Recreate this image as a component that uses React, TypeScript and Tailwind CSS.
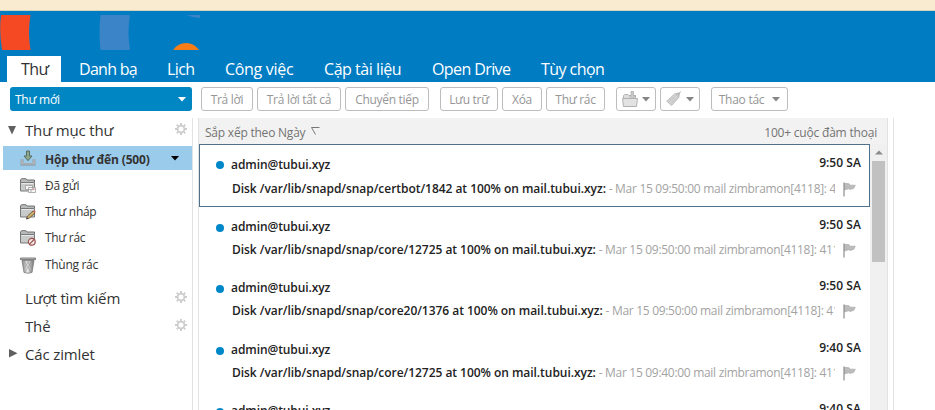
import React from "react";

const tabs = [
  { label: "Danh bạ", box: "w-[88px]", text: "tracking-[-0.7px]" },
  { label: "Lịch", box: "w-[58px]", text: "tracking-[-0.6px]" },
  { label: "Công việc", box: "w-[99px]", text: "tracking-[-0.3px]" },
  { label: "Cặp tài liệu", box: "w-[108px]", text: "tracking-[-0.45px]" },
  { label: "Open Drive", box: "w-[109px]", text: "tracking-[-0.6px]" },
  { label: "Tùy chọn", box: "w-[90px]", text: "tracking-[-0.55px]" },
];

const mails = [
  { path: "certbot/1842", time: "9:50 SA", clock: "09:50:00", tail: "4", box: "h-[63px] border border-[#4f718c]", head: "h-[36px] pt-[3px]" },
  { path: "core/12725", time: "9:50 SA", clock: "09:50:00", tail: "411", box: "h-[61px] border-x border-transparent", head: "h-[35px] pt-[5px]" },
  { path: "core20/1376", time: "9:50 SA", clock: "09:50:00", tail: "41", box: "h-[62px] border-x border-transparent", head: "h-[35px] pt-[5px]" },
  { path: "core/12725", time: "9:40 SA", clock: "09:40:00", tail: "411", box: "h-[61px] border-x border-transparent", head: "h-[35px] pt-[5px]" },
  { path: "core/12725", time: "9:40 SA", clock: "09:40:00", tail: "411", box: "h-[61px] border-x border-transparent", head: "h-[35px] pt-[5px]" },
];

function Caret({ className }: { className: string }) {
  return (
    <svg width="8" height="5" viewBox="0 0 8 5" className={`shrink-0 ${className}`}>
      <path d="M0 0h8L4 4.5z" fill="currentColor" />
    </svg>
  );
}

function Gear() {
  return (
    <svg width="12" height="12" viewBox="0 0 12 12" className="-mt-[3px] shrink-0 text-[#cdcdcd]" fill="none" stroke="currentColor">
      <circle cx="6" cy="6" r="3.400" strokeWidth="1.800" />
      <path
        d="M6 0v2M6 10v2M0 6h2M10 6h2M1.800 1.800l1.300 1.300M8.900 8.900l1.300 1.300M1.800 10.200l1.300-1.300M8.900 3.100l1.300-1.300"
        strokeWidth="2"
      />
    </svg>
  );
}

function Flag() {
  return (
    <svg width="13" height="15" viewBox="0 0 13 15" className="shrink-0">
      <path d="M1.500 1.200L6 1.800 7.500 3.200H12.300L10.800 6.200 7.500 7.400 5.500 6.800 1.500 8z" fill="#bcbcbc" stroke="#a2a2a2" strokeWidth=".6" />
      <path d="M1 .5v14" stroke="#8e8e8e" strokeWidth="1.200" />
    </svg>
  );
}

function FolderShape() {
  return (
    <>
      <path d="M.5 12.500V2L1.500 .7h4.500l1 1.300h7.500v2" fill="#b9bbbb" stroke="#707273" />
      <path d="M.5 13V4.500h14V13z" fill="#c9cbcb" stroke="#77797a" />
      <path d="M1.500 5.500h12" stroke="#e8e8e8" />
    </>
  );
}

function FolderIcon({ kind }: { kind: string }) {
  if (kind === "inbox") {
    return (
      <svg width="16" height="16" viewBox="0 0 16 16" className="shrink-0">
        <path d="M2 9v5.300h12V9" fill="none" stroke="#858b90" strokeWidth="2.600" />
        <path d="M2 9v5h12V9" fill="none" stroke="#c4cacd" strokeWidth="1.200" />
        <path d="M6.500 1h3v5H12l-4 4.700L4 6h2.500z" fill="#8ca78c" stroke="#526453" strokeWidth=".9" />
      </svg>
    );
  }
  if (kind === "trash") {
    return (
      <svg width="16" height="17" viewBox="0 0 16 17" className="shrink-0">
        <defs>
          <linearGradient id="bin" x1="0" x2="1">
            <stop offset="0" stopColor="#808080" />
            <stop offset=".45" stopColor="#ececec" />
            <stop offset="1" stopColor="#707070" />
          </linearGradient>
        </defs>
        <path d="M2 3.500h12L12 15.500Q8 17 4 15.500z" fill="url(#bin)" stroke="#7c7c7c" strokeWidth=".8" />
        <path d="M4 4l7 11M7 4l5 8M12 4L5 15M9 4l-5 8" stroke="#8a8a8a" strokeWidth=".5" />
        <path d="M.5 1h15v1.600H.5z" fill="#c9c9c9" stroke="#606060" strokeWidth=".8" />
      </svg>
    );
  }
  return (
    <svg width="16" height="16" viewBox="0 0 16 16" className="shrink-0">
      <FolderShape />
      {kind === "sent" && (
        <>
          <path d="M5.500 7.500h7v4h-7zM8.500 9.500h7v5h-7z" fill="#f8f8f8" stroke="#9c9c9c" strokeWidth=".8" />
          <path d="M10 12h2.500M10 13.200h2" stroke="#9a9a9a" strokeWidth=".6" />
          <path d="M13.200 10.500h1.200v1.200h-1.200z" fill="#c55" />
        </>
      )}
      {kind === "draft" && (
        <>
          <path d="M6.500 15l1-3 5.500-5 2 2-5.500 5z" fill="#cdb068" stroke="#5b4d32" strokeWidth=".8" />
          <path d="M13 7l1.200-1 1.500 1.600L15 9z" fill="#d26b63" />
          <path d="M6.300 15.300l.5-1.700 1.300 1.200z" fill="#333" />
        </>
      )}
      {kind === "junk" && (
        <>
          <circle cx="11.800" cy="11.800" r="3.400" fill="#f3e9e8" stroke="#9c5350" strokeWidth="1.200" />
          <path d="M9.500 14.100l4.600-4.600" stroke="#9c5350" strokeWidth="1.200" />
        </>
      )}
    </svg>
  );
}

function ToolButton({ children, className }: { children: React.ReactNode; className: string }) {
  return (
    <button
      className={`flex h-6 shrink-0 items-center justify-center whitespace-nowrap rounded-[3px] border border-[#bdbdbd] bg-white text-[12px] text-[#969696] ${className}`}
    >
      {children}
    </button>
  );
}

function Section({ label, arrow, gear, className }: { label: string; arrow?: string; gear?: boolean; className: string }) {
  return (
    <div className={`flex h-7 items-center pl-2 pr-[5px] ${className}`}>
      <div className="w-[17px] text-[#606060]">
        {arrow === "down" && (
          <svg width="9" height="9" viewBox="0 0 9 9"><path d="M0 0h8L4 8.500z" fill="currentColor" /></svg>
        )}
        {arrow === "right" && (
          <svg width="9" height="9" viewBox="0 0 9 9" className="-mt-0.5 ml-px"><path d="M0 0v8.500L8.500 4.200z" fill="currentColor" /></svg>
        )}
      </div>
      <span className="flex-1 whitespace-nowrap text-[15px] tracking-[-0.15px] text-[#333]">{label}</span>
      {gear && <Gear />}
    </div>
  );
}

function Folder({ kind, label, className }: { kind: string; label: string; className: string }) {
  return (
    <div className={`flex items-center pl-5 text-[12px] tracking-[-0.3px] text-[#333] ${className}`}>
      <FolderIcon kind={kind} />
      <span className="ml-[9px] whitespace-nowrap">{label}</span>
    </div>
  );
}

export default function App() {
  return (
    <div className="flex h-[410px] w-[935px] flex-col overflow-hidden bg-white font-['Open_Sans','Noto_Sans',sans-serif]">
      <div className="h-[11px] shrink-0 border-b border-[#d3d2bd] bg-[#f8ebcf]" />

      <header className="flex h-[71px] shrink-0 flex-col bg-[#007cc3]">
        <svg width="200" height="35" viewBox="0 0 200 35" className="mt-1 shrink-0">
          <path d="M1 0h29.500q-3 17.500 0 35H2Q-1 17 1 0z" fill="#f54923" />
          <path d="M100.500 0H130q-3 17.500 0 35h-29.500q-2-17.500 0-35z" fill="#3c84c8" />
          <path d="M173 35q5-7 13-7t13 7z" fill="#f77d18" />
          <path d="M187 0h13v3q-7 0-13-3z" fill="#3c84c8" />
        </svg>
        <nav className="mt-1.5 flex h-[26px] pl-[7px] text-[16px] leading-[27px] text-white">
          <div className="mr-1 w-[54px] bg-white pl-[14px] tracking-[-0.6px] text-[#333]">Thư</div>
          {tabs.map((t) => (
            <div key={t.label} className={`whitespace-nowrap pl-[14px] ${t.box} ${t.text}`}>{t.label}</div>
          ))}
        </nav>
      </header>

      <div className="flex h-9 shrink-0 pl-[10px] pt-[5px]">
        <button className="mr-[9px] flex h-6 w-[182px] items-center justify-between rounded-[3px] bg-[#0087c3] pl-[5px] pr-[6px] pt-px text-[12px] tracking-[-0.25px] text-white">
          Thư mới
          <Caret className="text-white" />
        </button>
        <div className="flex gap-1 tracking-[-0.3px]">
          <ToolButton className="w-[52px] pt-px">Trả lời</ToolButton>
          <ToolButton className="w-[84px] pt-px">Trả lời tất cả</ToolButton>
          <ToolButton className="w-[84px] pt-px">Chuyển tiếp</ToolButton>
        </div>
        <div className="ml-[11px] flex gap-1 tracking-[-0.3px]">
          <ToolButton className="w-[58px] pt-px">Lưu trữ</ToolButton>
          <ToolButton className="w-10 pt-px">Xóa</ToolButton>
          <ToolButton className="w-[59px] pt-px">Thư rác</ToolButton>
        </div>
        <div className="ml-[11px] flex gap-1">
          <ToolButton className="w-10 gap-1">
            <svg width="16" height="16" viewBox="0 0 16 16">
              <path d="M1.500 8V4.500l1-1H6l1 1h6.500V8" fill="#ddd" stroke="#b4b4b4" />
              <path d="M.5 7.500h15l-1 8h-13z" fill="#e2e2e2" stroke="#b0b0b0" />
              <path d="M9 .5h2.500v4h2L10.200 8 7 4.500h2z" fill="#c9c9c9" stroke="#aaa" strokeWidth=".7" />
            </svg>
            <Caret className="text-[#858585]" />
          </ToolButton>
          <ToolButton className="w-10 gap-1">
            <svg width="16" height="16" viewBox="0 0 16 16">
              <path d="M.8 10.200L8.500 3l5-1.200-.7 4.700-7.300 8z" fill="#d4d4d4" stroke="#b0b0b0" strokeWidth=".8" />
              <path d="M3.500 10.500L8.500 5.800M5.200 12.200l5-5" stroke="#bbb" strokeWidth=".7" />
              <circle cx="11.400" cy="4" r="1" fill="#fff" stroke="#999" strokeWidth=".6" />
              <path d="M11.400 4L15 .5" stroke="#aaa" strokeWidth=".8" />
            </svg>
            <Caret className="text-[#858585]" />
          </ToolButton>
        </div>
        <ToolButton className="ml-[11px] w-[77px] gap-2 pt-px tracking-[-0.25px]">
          Thao tác
          <Caret className="-mt-px text-[#858585]" />
        </ToolButton>
      </div>

      <main className="flex min-h-0 flex-1">
        <aside className="flex w-[193px] shrink-0 flex-col border-r border-[#e2e2e2]">
          <Section label="Thư mục thư" arrow="down" gear className="-mt-0.5" />
          <div className="ml-[3px] mt-0.5 flex h-6 items-center bg-[#9acbeb] pl-[17px] pr-[13px] text-[12px] font-bold text-[#333]">
            <FolderIcon kind="inbox" />
            <span className="ml-[9px] flex-1 whitespace-nowrap pt-[3px] tracking-[-0.15px]">Hộp thư đến (500)</span>
            <Caret className="mt-px text-black" />
          </div>
          <Folder kind="sent" label="Đã gửi" className="mt-[3px] h-[26px]" />
          <Folder kind="draft" label="Thư nháp" className="h-[26px]" />
          <Folder kind="junk" label="Thư rác" className="h-[26px]" />
          <Folder kind="trash" label="Thùng rác" className="h-7" />
          <Section label="Lượt tìm kiếm" gear className="mt-[5px]" />
          <Section label="Thẻ" gear className="" />
          <Section label="Các zimlet" arrow="right" className="" />
        </aside>

        <section className="ml-[5px] flex w-[690px] shrink-0 flex-col border-x border-[#e2e2e2]">
          <div className="flex h-[26px] shrink-0 items-center bg-[#f2f2f2] pl-[6px] pr-[10px] pt-[3px] text-[12px] text-[#747474]">
            <span className="tracking-[-0.22px]">Sắp xếp theo Ngày</span>
            <svg width="9" height="8" viewBox="0 0 9 8" className="-mt-1 ml-[6px]" fill="none" stroke="#777">
              <path d="M8.500.5H.5L4.500 7.500" />
            </svg>
            <span className="ml-auto tracking-[-0.2px]">100+ cuộc đàm thoại</span>
          </div>
          <div className="flex min-h-0 flex-1">
            <div className="w-[671px] overflow-hidden">
              {mails.map((m, i) => (
                <article key={i} className={`overflow-hidden text-[12px] text-[#222] ${m.box}`}>
                  <div className={`flex items-center pl-4 pr-2 ${m.head}`}>
                    <i className="mt-px size-2 rounded-full bg-[#0087c8]" />
                    <span className="ml-[7px] flex-1 font-semibold tracking-[-0.08px]">admin@tubui.xyz</span>
                    <span className="-mt-1 font-semibold tracking-[0.05px]">{m.time}</span>
                  </div>
                  <div className="flex h-4 items-center pl-8 pr-[13px]">
                    <div className="w-[603px] overflow-hidden whitespace-nowrap">
                      <span className="font-semibold tracking-[-0.04px]">Disk /var/lib/snapd/snap/{m.path} at 100% on mail.tubui.xyz:</span>
                      <span className="tracking-[-0.3px] text-[#a3a3a3]"> - Mar 15 {m.clock} mail zimbramon[4118]: {m.tail}</span>
                    </div>
                    <span className="ml-[8px]"><Flag /></span>
                  </div>
                </article>
              ))}
            </div>
            <div className="flex w-[17px] flex-col items-center bg-[#f0f0f0]">
              <svg width="8" height="5" viewBox="0 0 8 5" className="mb-[6px] mt-[6px] shrink-0"><path d="M0 4.500h8L4 .5z" fill="#8b8b8b" /></svg>
              <div className="h-[101px] w-[13px] shrink-0 bg-[#c1c1c1]" />
            </div>
          </div>
        </section>
        <div className="ml-[5px] flex-1 border-l border-[#e2e2e2]" />
      </main>
    </div>
  );
}
